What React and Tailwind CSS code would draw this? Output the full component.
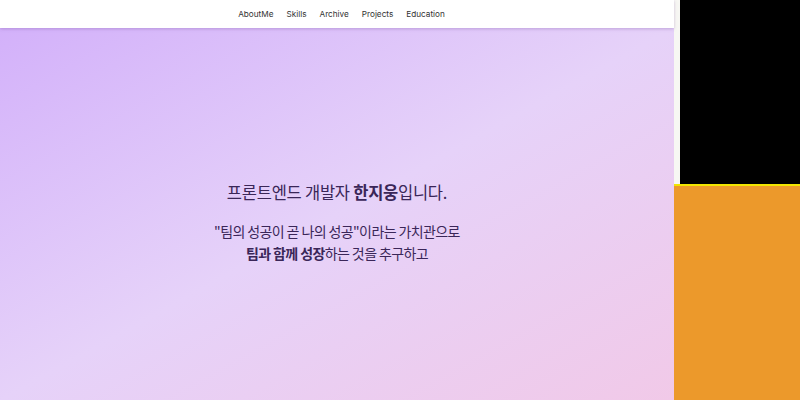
export default function App() {
  const navItems = ["AboutMe", "Skills", "Archive", "Projects", "Education"];

  return (
    <div className="flex h-[400px] w-[800px] overflow-hidden font-['Inter','Noto_Sans_CJK_KR',sans-serif]">
      {/* main column */}
      <div className="flex w-[674px] flex-col">
        <header className="relative z-10 flex h-[28px] shrink-0 items-center justify-center gap-[13px] bg-white pl-[9px] shadow-[0_1px_3px_rgba(120,80,160,0.35)]">
          {navItems.map((item) => (
            <span key={item} className="text-[8.2px] text-[#333]">
              {item}
            </span>
          ))}
        </header>

        <section className="flex flex-1 flex-col items-center justify-center bg-gradient-to-br from-[#d3b1fa] via-[#e6d2f9] to-[#f1c9e8] pt-[14px] font-['Noto_Sans_CJK_KR',sans-serif] text-[#3a2658]">
          <h1 className="text-[16.5px] leading-[28px] tracking-[-0.25px]">
            프론트엔드 개발자 <span className="font-bold">한지웅</span>입니다.
          </h1>
          <p className="mt-[14px] text-center text-[14px] leading-[22px] tracking-[-0.6px]">
            "팀의 성공이 곧 나의 성공"이라는 가치관으로
            <br />
            <span className="font-bold">팀과 함께 성장</span>하는 것을 추구하고
          </p>
        </section>
      </div>

      {/* right panel */}
      <div className="flex flex-1 flex-col">
        <div className="flex h-[184px]">
          <div className="w-[6px] bg-[#f7f7f3]" />
          <div className="flex-1 bg-black" />
        </div>
        <div className="h-[2px] bg-[#f2e600]" />
        <div className="flex-1 bg-[#ec992b]" />
      </div>
    </div>
  );
}
